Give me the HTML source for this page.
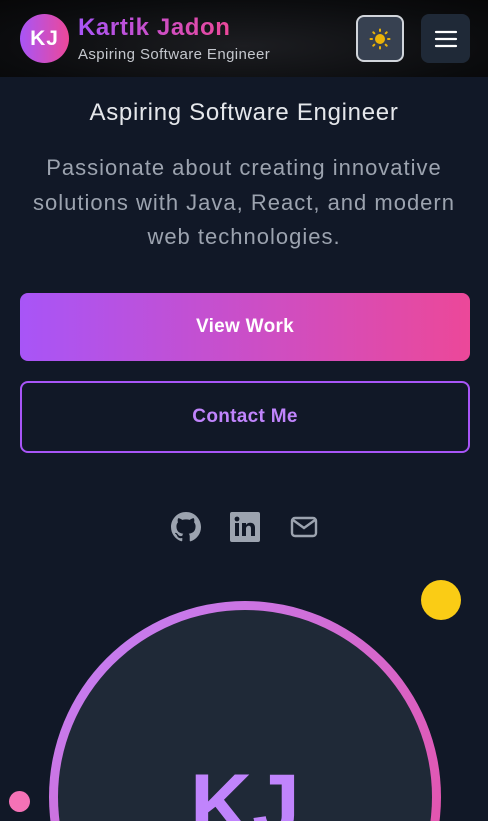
<!DOCTYPE html>
<html><head><meta charset="utf-8"><style>
*{margin:0;padding:0;box-sizing:border-box}
html,body{width:488px;height:821px;overflow:hidden}
body{background:#111827;font-family:"Liberation Sans",sans-serif}
#w{position:relative;width:488px;height:821px;overflow:hidden}
.hdr{position:absolute;left:0;top:0;width:488px;height:77px;background:radial-gradient(ellipse at 50% 60%,#1c1d21 0%,#0b0c0e 70%,#070708 100%)}
.av{position:absolute;left:20px;top:14px;width:49px;height:49px;border-radius:50%;background:linear-gradient(90deg,#a855f7,#ec4899);color:#fff;font-weight:bold;font-size:21px;display:flex;align-items:center;justify-content:center;letter-spacing:1px}
.nm{position:absolute;left:78px;top:14px;font-size:24px;font-weight:bold;letter-spacing:0.6px;background:linear-gradient(90deg,#a855f7,#ec4899);-webkit-background-clip:text;color:transparent}
.sub{position:absolute;left:78px;top:46px;font-size:15px;color:#c4c7cd;letter-spacing:0.4px}
.b1{position:absolute;left:356px;top:15px;width:48px;height:47px;border-radius:8px;background:#374151;border:2px solid #d1d5db;display:flex;align-items:center;justify-content:center}
.b2{position:absolute;left:421px;top:14px;width:49px;height:49px;border-radius:8px;background:#1f2937;display:flex;align-items:center;justify-content:center}
.t{position:absolute;width:488px;text-align:center}
.btn{position:absolute;left:20px;width:450px;border-radius:8px;display:flex;align-items:center;justify-content:center;font-size:19px;font-weight:bold;letter-spacing:0.3px}
</style></head><body><div id="w">
<div class="hdr">
<div class="av">KJ</div>
<div class="nm">Kartik Jadon</div>
<div class="sub">Aspiring Software Engineer</div>
<div class="b1"><svg width="22" height="22" viewBox="0 0 22 22"><circle cx="11" cy="11" r="5" fill="#eab308"/><g stroke="#eab308" stroke-width="2" stroke-linecap="round"><path d="M11 1.5v1.5M11 19v1.5M1.5 11h1.5M19 11h1.5M4.3 4.3l1 1M16.7 16.7l1 1M4.3 17.7l1-1M16.7 5.3l1-1"/></g></svg></div>
<div class="b2"><svg width="24" height="20" viewBox="0 0 24 20"><g stroke="#fff" stroke-width="2.2" stroke-linecap="round"><path d="M2 3h20M2 10h20M2 17h20"/></g></svg></div>
</div>
<div class="t" style="top:99px;font-size:24px;color:#e5e7eb;letter-spacing:0.7px">Aspiring Software Engineer</div>
<div class="t" style="top:151px;font-size:22px;line-height:34.5px;color:#9ca3af;padding:0 22px;letter-spacing:1px">Passionate about creating innovative solutions with Java, React, and modern web technologies.</div>
<div class="btn" style="top:293px;height:68px;background:linear-gradient(90deg,#a855f7,#ec4899);color:#fff">View Work</div>
<div class="btn" style="top:381px;height:72px;border:2px solid #a855f7;color:#c084fc">Contact Me</div>
<svg style="position:absolute;left:171px;top:512px" width="30" height="30" viewBox="0 0 16 16"><path fill="#9ca3af" d="M8 0C3.58 0 0 3.58 0 8c0 3.54 2.29 6.53 5.47 7.59.4.07.55-.17.55-.38v-1.33c-2.23.48-2.7-1.07-2.7-1.07-.36-.92-.89-1.17-.89-1.17-.73-.5.05-.49.05-.49.8.06 1.23.83 1.23.83.71 1.22 1.87.87 2.33.66.07-.52.28-.87.51-1.07-1.78-.2-3.65-.89-3.65-3.95 0-.87.31-1.59.82-2.15-.08-.2-.36-1.02.08-2.12 0 0 .67-.21 2.2.82.64-.18 1.32-.27 2-.27.68 0 1.36.09 2 .27 1.53-1.04 2.2-.82 2.2-.82.44 1.1.16 1.92.08 2.12.51.56.82 1.27.82 2.15 0 3.07-1.87 3.75-3.65 3.95.29.25.54.73.54 1.48v2.2c0 .21.15.46.55.38A8.01 8.01 0 0016 8c0-4.42-3.58-8-8-8z"/></svg>
<svg style="position:absolute;left:230px;top:512px" width="30" height="30" viewBox="0 0 30 30"><rect width="30" height="30" rx="2" fill="#9ca3af"/><rect x="5" y="11" width="4" height="13" fill="#111827"/><circle cx="7" cy="7" r="2.4" fill="#111827"/><path d="M12 11h4v2c1-1.6 2.5-2.3 4.3-2.3 3 0 4.7 1.8 4.7 5.3V24h-4v-7.5c0-1.8-.7-2.8-2.2-2.8-1.6 0-2.8 1.1-2.8 3V24h-4z" fill="#111827"/></svg>
<svg style="position:absolute;left:290px;top:516px" width="28" height="22" viewBox="0 0 28 22"><rect x="2" y="2" width="24" height="18" rx="3" fill="none" stroke="#9ca3af" stroke-width="2.4"/><path d="M3 4l11 8 11-8" fill="none" stroke="#9ca3af" stroke-width="2.4"/></svg>
<div style="position:absolute;left:421px;top:580px;width:40px;height:40px;border-radius:50%;background:#facc15"></div>
<div style="position:absolute;left:49px;top:601px;width:392px;height:392px;border-radius:50%;background:linear-gradient(135deg,#c084fc,#ec4899);padding:9px">
<div style="width:100%;height:100%;border-radius:50%;background:#1f2937;text-align:center;color:#c084fc;font-weight:bold;font-size:86px;padding-top:146px">KJ</div>
</div>
<div style="position:absolute;left:9px;top:791px;width:21px;height:21px;border-radius:50%;background:#f472b6"></div>
</div></body></html>
